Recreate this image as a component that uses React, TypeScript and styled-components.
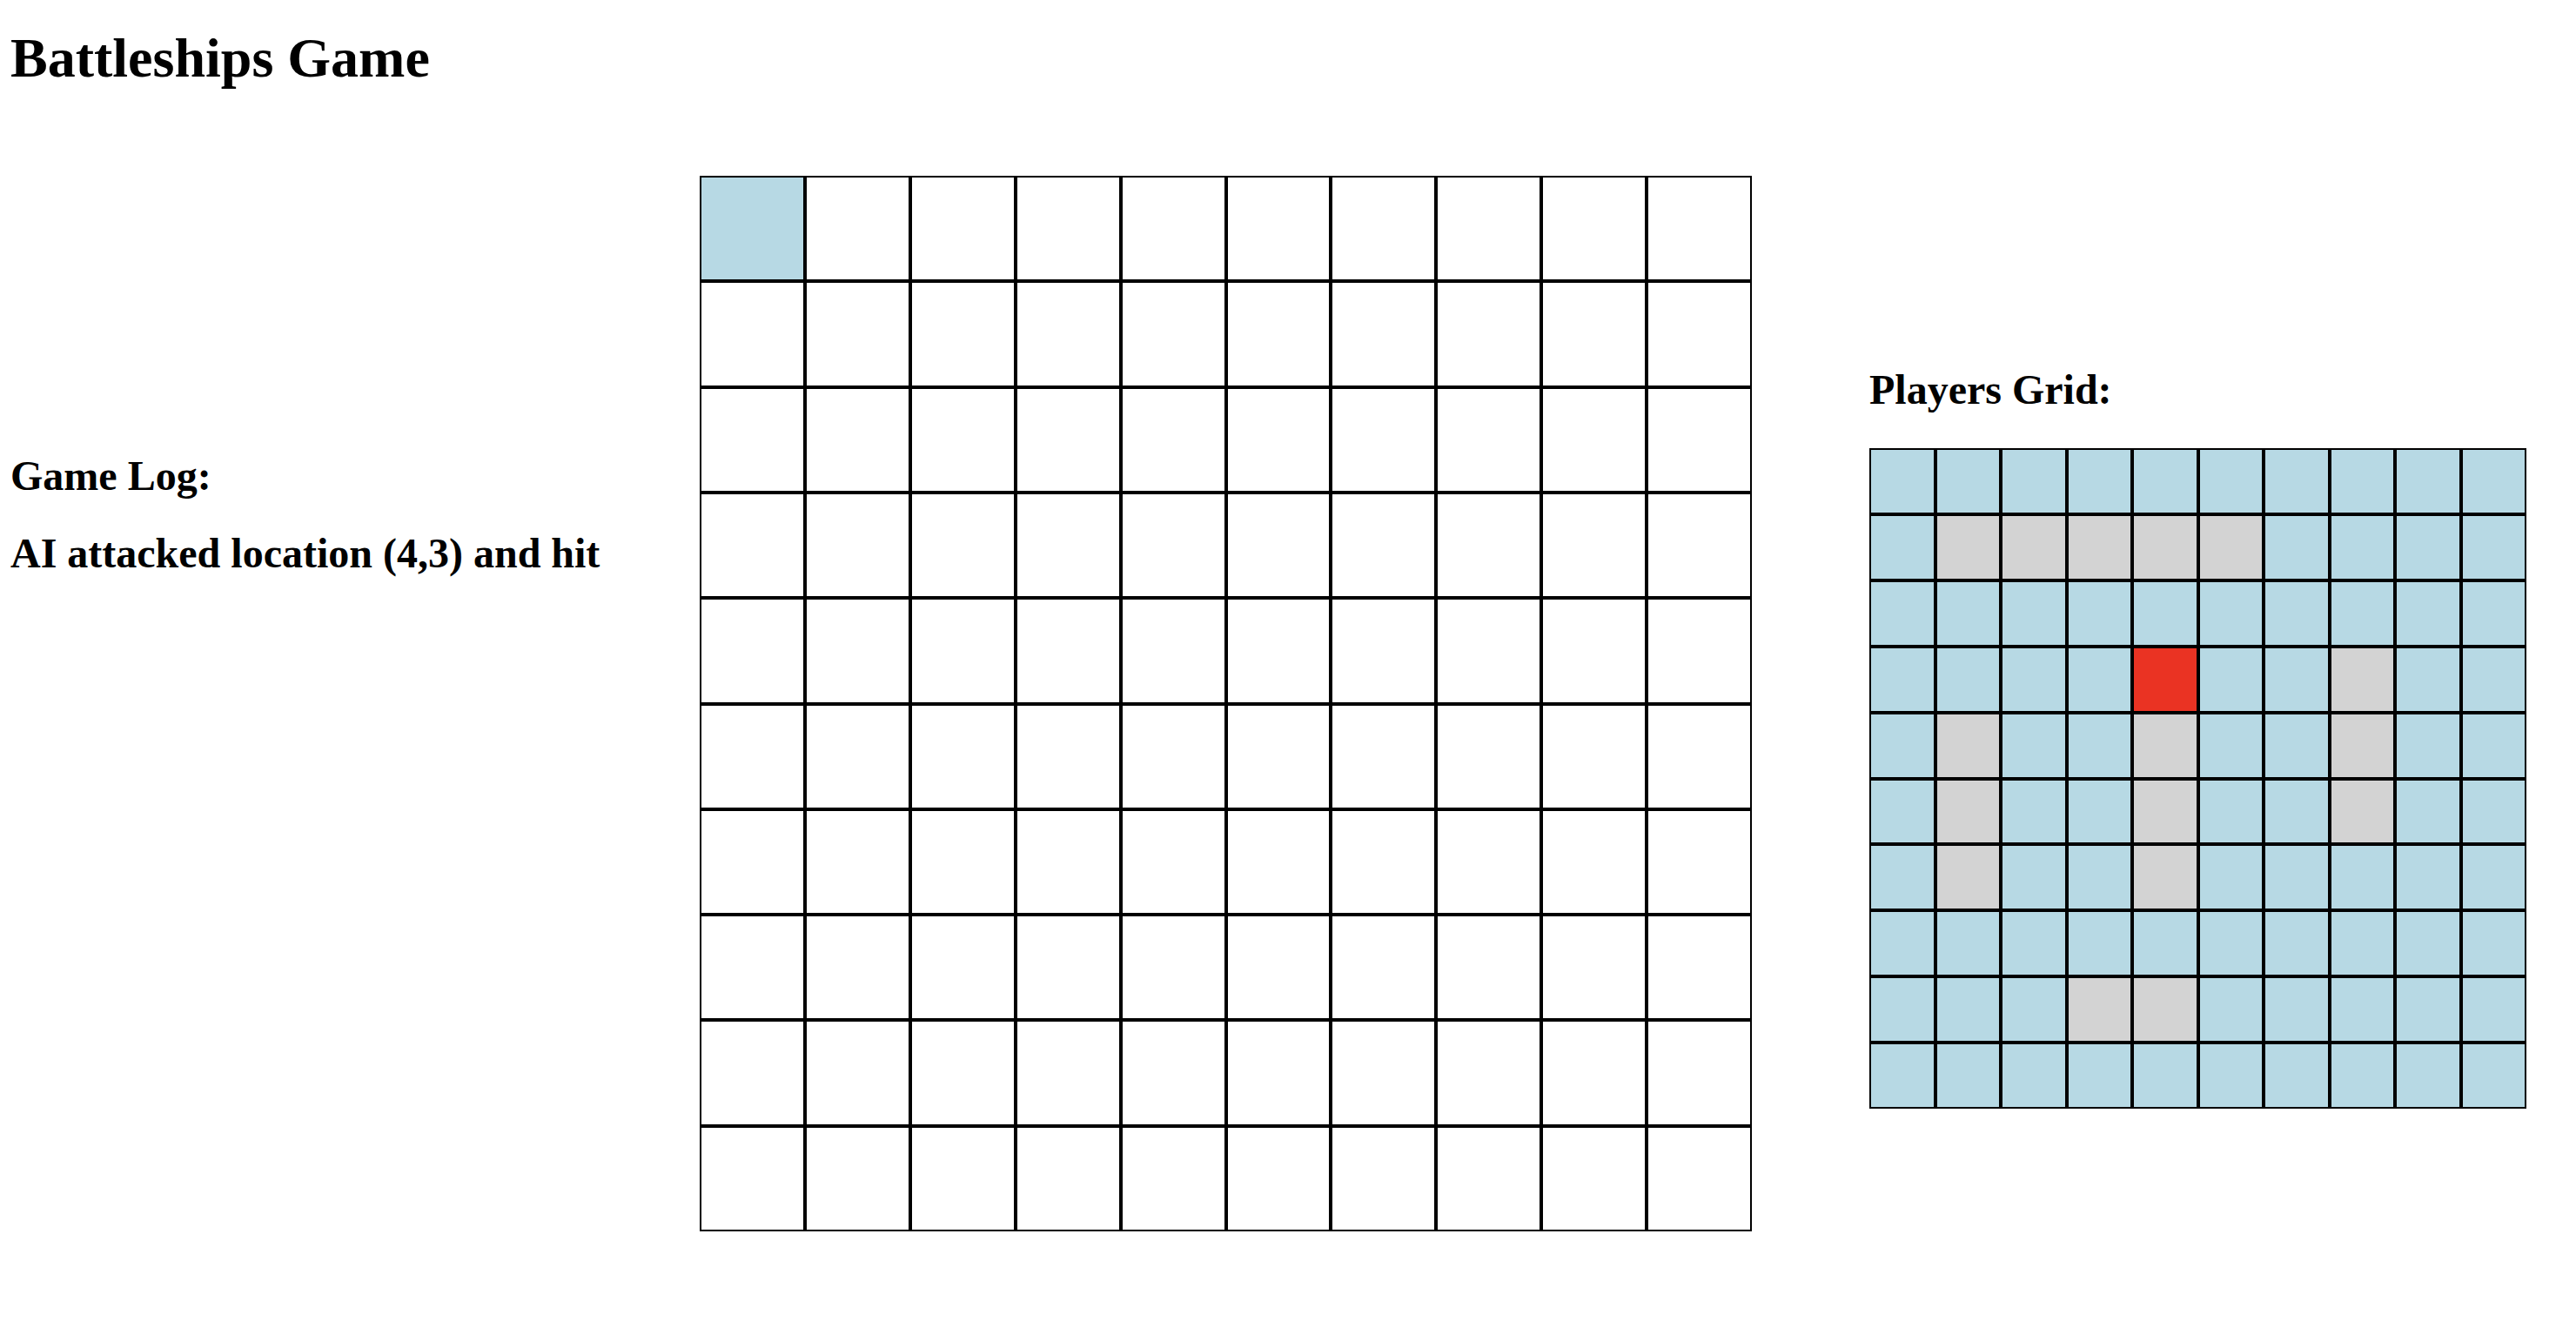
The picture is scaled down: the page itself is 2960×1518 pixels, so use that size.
import React from "react";
import styled, { createGlobalStyle } from "styled-components";

const GlobalStyle = createGlobalStyle`
  html, body {
    margin: 0;
    padding: 0;
    background: #ffffff;
    color: #000000;
    font-family: "Liberation Serif", "Times New Roman", serif;
  }
`;

const Page = styled.div`
  padding: 35px 0 0 12px;
`;

const Title = styled.h1`
  margin: 0 0 103px;
  font-size: 64px;
  line-height: 64px;
  font-weight: 700;
`;

const Row = styled.div`
  display: flex;
  align-items: flex-start;
`;

const LogPanel = styled.section`
  width: 792px;
  flex: none;
  margin-top: 321px;
`;

const Heading = styled.h2<{ $gap?: number }>`
  margin: 0 0 ${(p) => p.$gap ?? 0}px;
  font-size: 48px;
  line-height: 48px;
  font-weight: 700;
`;

const Board = styled.div<{ $w: number; $h: number }>`
  display: grid;
  flex: none;
  width: ${(p) => p.$w}px;
  height: ${(p) => p.$h}px;
  grid-template-columns: repeat(10, 1fr);
  grid-template-rows: repeat(10, 1fr);
`;

type CellState = "empty" | "water" | "ship" | "hit";

const cellColors: Record<CellState, string> = {
  empty: "#ffffff",
  water: "#b7d9e4",
  ship: "#d3d3d3",
  hit: "#ea3323",
};

const Cell = styled.div<{ $state: CellState }>`
  box-sizing: border-box;
  border: 2px solid #000000;
  background: ${(p) => cellColors[p.$state]};
`;

const PlayersPanel = styled.section`
  flex: none;
  margin-left: 135px;
  margin-top: 222px;
`;

const ships = new Set<string>([
  "1,1", "1,2", "1,3", "1,4", "1,5",
  "4,1", "5,1", "6,1",
  "4,4", "5,4", "6,4",
  "3,7", "4,7", "5,7",
  "8,3", "8,4",
]);
const hits = new Set<string>(["3,4"]);

const range = Array.from({ length: 10 }, (_, i) => i);

export default function App() {
  return (
    <Page>
      <GlobalStyle />
      <Title>Battleships Game</Title>
      <Row>
        <LogPanel>
          <Heading $gap={41}>Game Log:</Heading>
          <Heading>AI attacked location (4,3) and hit</Heading>
        </LogPanel>
        <Board $w={1209} $h={1213}>
          {range.map((r) =>
            range.map((c) => (
              <Cell key={`${r}-${c}`} $state={r === 0 && c === 0 ? "water" : "empty"} />
            ))
          )}
        </Board>
        <PlayersPanel>
          <Heading $gap={43}>Players Grid:</Heading>
          <Board $w={755} $h={759}>
            {range.map((r) =>
              range.map((c) => {
                const k = `${r},${c}`;
                const s: CellState = hits.has(k) ? "hit" : ships.has(k) ? "ship" : "water";
                return <Cell key={k} $state={s} />;
              })
            )}
          </Board>
        </PlayersPanel>
      </Row>
    </Page>
  );
}
